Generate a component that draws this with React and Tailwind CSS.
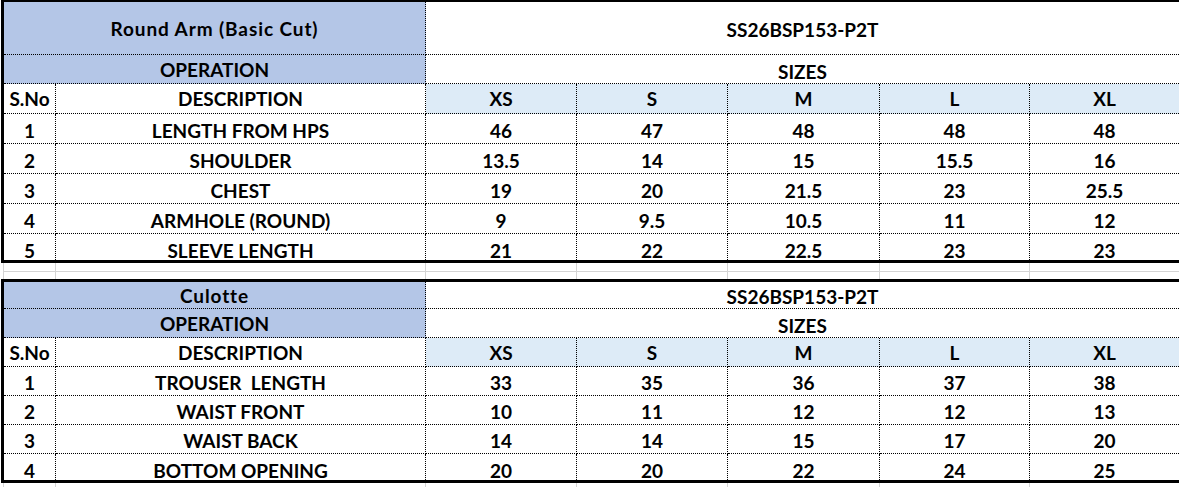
const cols = "grid grid-cols-[52px_370px_151px_151px_152px_150px_1fr]";
const sizes = ["XS", "S", "M", "L", "XL"];

const Cell = (props) => {
  const { children, className = "", last } = props;
  return (
    <div
      className={`flex items-center justify-center whitespace-pre border-dotted border-black ${
        last ? "" : "border-r"
      } ${className}`}
    >
      {children}
    </div>
  );
};

// one spec block
const SpecTable = (props) => {
  const { title, code, rows, topBorder, h } = props;
  return (
    <div className={`border-l-[3px] border-b-[3px] border-black ${topBorder}`}>
      <div className={`${cols} ${h.title}`}>
        <Cell className="col-span-2 bg-[#b4c6e7] border-b tracking-[0.9px]">
          {title}
        </Cell>
        <Cell className="col-span-5 border-b pt-[2px]" last>
          {code}
        </Cell>
      </div>
      <div className={`${cols} h-[29px]`}>
        <Cell className="col-span-2 bg-[#b4c6e7] border-b">OPERATION</Cell>
        <Cell className="col-span-5 border-b pt-[4px]" last>
          SIZES
        </Cell>
      </div>
      <div className={`${cols} ${h.head}`}>
        <Cell className="border-b">S.No</Cell>
        <Cell className="border-b">DESCRIPTION</Cell>
        {sizes.map((s, i) => (
          <Cell key={s} className="border-b bg-[#ddebf7]" last={i === 4}>
            {s}
          </Cell>
        ))}
      </div>
      {rows.map((r, idx) => {
        const isLast = idx === rows.length - 1;
        const rowCls = isLast
          ? "h-[26px] pt-[6px]"
          : `${h.row} pt-[3px] border-b`;
        return (
          <div key={idx} className={`${cols}`}>
            <Cell className={rowCls}>{idx + 1}</Cell>
            <Cell className={rowCls}>{r[0]}</Cell>
            {r.slice(1).map((v, i) => (
              <Cell key={i} className={rowCls} last={i === 4}>
                {v}
              </Cell>
            ))}
          </div>
        );
      })}
    </div>
  );
};

const GridGap = (props) => {
  const { children } = props;
  return (
    <div className={`ml-[2px] border-l border-[#d4d4d4] ${cols}`}>
      {children}
    </div>
  );
};

const GapCells = (props) => {
  const { className } = props;
  return [0, 1, 2, 3, 4, 5, 6].map((i) => (
    <div
      key={i}
      className={`${className} ${i < 6 ? "border-r" : ""} border-[#d4d4d4]`}
    />
  ));
};

const top = [
  ["LENGTH FROM HPS", "46", "47", "48", "48", "48"],
  ["SHOULDER", "13.5", "14", "15", "15.5", "16"],
  ["CHEST", "19", "20", "21.5", "23", "25.5"],
  ["ARMHOLE (ROUND)", "9", "9.5", "10.5", "11", "12"],
  ["SLEEVE LENGTH", "21", "22", "22.5", "23", "23"],
];

const bottom = [
  ["TROUSER  LENGTH", "33", "35", "36", "37", "38"],
  ["WAIST FRONT", "10", "11", "12", "12", "13"],
  ["WAIST BACK", "14", "14", "15", "17", "20"],
  ["BOTTOM OPENING", "20", "20", "22", "24", "25"],
];

export default function App() {
  return (
    <div className="w-[1179px] h-[487px] overflow-hidden bg-white pl-[1px] font-['Lato',sans-serif] text-[19px] leading-none font-bold text-black">
      <SpecTable
        title="Round Arm (Basic Cut)"
        code="SS26BSP153-P2T"
        rows={top}
        topBorder="border-t-[2px]"
        h={{ title: "h-[53px]", head: "h-[30px]", row: "h-[30px]" }}
      />
      <GridGap>
        <GapCells className="h-[9px] border-b" />
      </GridGap>
      <GridGap>
        <GapCells className="h-[7px]" />
      </GridGap>
      <SpecTable
        title="Culotte"
        code="SS26BSP153-P2T"
        rows={bottom}
        topBorder="border-t-[3px]"
        h={{ title: "h-[27px]", head: "h-[29px]", row: "h-[29px]" }}
      />
      <GridGap>
        <GapCells className="h-[4px]" />
      </GridGap>
    </div>
  );
}
